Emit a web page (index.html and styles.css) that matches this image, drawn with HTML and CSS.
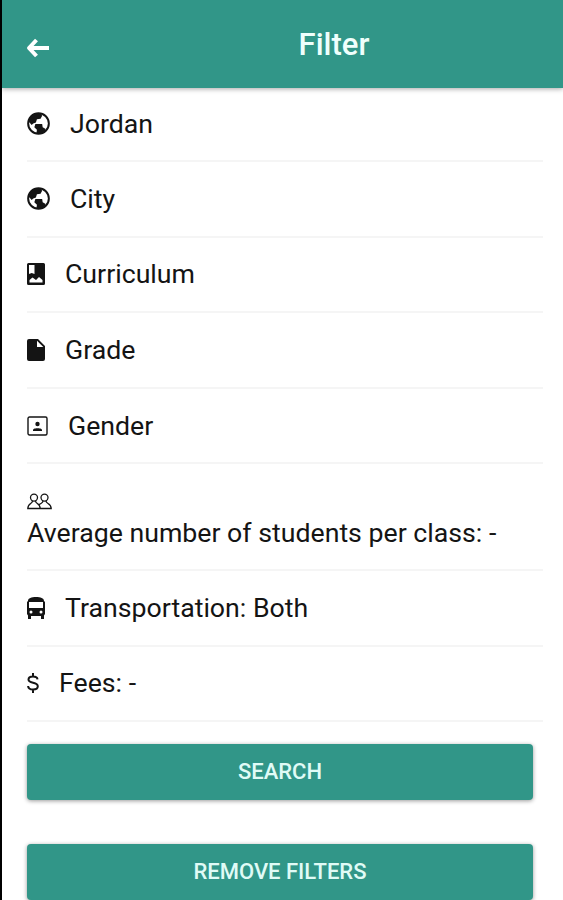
FILE: index.html
```
<!DOCTYPE html>
<html lang="en">
<head>
    <meta charset="UTF-8">
    <meta name="viewport" content="width=device-width, initial-scale=1.0">
    <title>Filter</title>
    <link rel="stylesheet" href="styles.css">
</head>
<body>
    <header class="toolbar">
        <button class="back-button" aria-label="Back">
            <svg width="24" height="20" viewBox="0 0 24 20"><path d="M10.500 2L3 10l7.500 8M3.500 10H23" fill="none" stroke="currentColor" stroke-width="4" stroke-linejoin="round"/></svg>
        </button>
        <h1>Filter</h1>
    </header>
    <main class="content">
        <ul class="filter-list">
            <li class="filter-item">
                <svg class="icon-globe" viewBox="0 0 22 22"><circle cx="11" cy="11" r="9.900" fill="none" stroke="currentColor" stroke-width="1.900"/><path d="M2 7C4 2.500 8 .800 13 1.200l1.500 2.300-1.500 3-3.500.5-1 3-2.500 1-1.500 1.500L1.500 9zM8 11.500h6.500l.5 3 2.500 1.500.5 2.500c-2 1.800-5 2.500-9 2l.5-3.500L7 14.500z"/></svg>
                <span>Jordan</span>
            </li>
            <li class="filter-item">
                <svg class="icon-globe" viewBox="0 0 22 22"><circle cx="11" cy="11" r="9.900" fill="none" stroke="currentColor" stroke-width="1.900"/><path d="M2 7C4 2.500 8 .800 13 1.200l1.500 2.300-1.500 3-3.500.5-1 3-2.500 1-1.500 1.500L1.500 9zM8 11.500h6.500l.5 3 2.500 1.500.5 2.500c-2 1.800-5 2.500-9 2l.5-3.500L7 14.500z"/></svg>
                <span>City</span>
            </li>
            <li class="filter-item">
                <svg class="icon-page" viewBox="0 0 18 22"><path fill-rule="evenodd" d="M1.500 0h15A1.500 1.500 0 0 1 18 1.500v19a1.500 1.500 0 0 1-1.500 1.500h-15A1.500 1.500 0 0 1 0 20.500v-19A1.500 1.500 0 0 1 1.500 0zM2 2v9l2.700-1L7.500 11V2zM2.500 19.500h13V17l-3.500-3-3 3-3.500-2.500-3 2.500z"/></svg>
                <span>Curriculum</span>
            </li>
            <li class="filter-item">
                <svg class="icon-page" viewBox="0 0 18 22"><path fill-rule="evenodd" d="M2 0h9l7 7v13a2 2 0 0 1-2 2H2a2 2 0 0 1-2-2V2a2 2 0 0 1 2-2zM10 1.700V8h6.300z"/></svg>
                <span>Grade</span>
            </li>
            <li class="filter-item">
                <svg class="icon-portrait" viewBox="0 0 21 20"><rect x="1" y="1" width="19" height="18" rx="1.500" fill="none" stroke="currentColor" stroke-width="1.400"/><circle cx="10.500" cy="8" r="2.200"/><path d="M6 15v-1c0-1.400 3-1.800 4.500-1.800S15 12.600 15 14v1z"/></svg>
                <span>Gender</span>
            </li>
            <li class="filter-item filter-item-tall">
                <svg class="icon-people" viewBox="0 0 25 17"><g fill="none" stroke="currentColor" stroke-width="1.300"><circle cx="7" cy="4.600" r="3.500"/><circle cx="17.500" cy="4.600" r="3.500"/><path d="M5.500 8c0 3-4.700 2-4.700 7.500h12.400C13.200 10 8.500 11 8.500 8M16 8c0 2-2.200 2.200-3.600 3.500M19 8c0 3 5.200 2 5.200 7.500h-11"/></g></svg>
                <span>Average number of students per class: -</span>
            </li>
            <li class="filter-item">
                <svg class="icon-page" viewBox="0 0 18 22"><path fill-rule="evenodd" d="M1 4c0-3 3.500-4 8-4s8 1 8 4l1 1v12l-1 1.500V22h-3v-3H4v3H1v-3.500L0 17V5zM2 5v6h14V5zM4 13.500a1.500 1.500 0 1 0 0 3 1.500 1.500 0 1 0 0-3zM14 13.500a1.500 1.500 0 1 0 0 3 1.500 1.500 0 1 0 0-3z"/></svg>
                <span>Transportation: Both</span>
            </li>
            <li class="filter-item">
                <svg class="icon-dollar" viewBox="0 0 12 20"><path d="M10.500 6.300C10.300 4.300 8.600 3.500 6 3.500S1.500 4.600 1.500 6.500C1.500 11 10.800 8.500 10.800 13.300c0 2-1.900 3.200-4.700 3.200S1.200 15.300 1.100 13M6 0v3.500M6 16.500V20" fill="none" stroke="currentColor" stroke-width="2"/></svg>
                <span>Fees: -</span>
            </li>
        </ul>
        <div class="actions">
            <button class="action-button">SEARCH</button>
            <button class="action-button">REMOVE FILTERS</button>
        </div>
    </main>
</body>
</html>
```
FILE: styles.css
```
* {
    box-sizing: border-box;
}
body {
    margin: 0;
    height: 900px;
    overflow: hidden;
    border-left: 2px solid #000;
    background-color: #fff;
    color: #141414;
    font-family: Roboto, sans-serif;
}
button {
    border: none;
    color: #fff;
    font-family: inherit;
    cursor: pointer;
}
.toolbar {
    display: flex;
    align-items: center;
    height: 88px;
    padding-top: 2px;
    background-color: #319688;
    box-shadow: 0 1px 5px rgba(0, 0, 0, 0.35);
}
.back-button {
    display: flex;
    width: 50px;
    padding: 6px 0 0 24px;
    background: none;
}
.toolbar h1 {
    flex: 1;
    margin: 0;
    padding-left: 53px;
    color: #effffc;
    font-size: 31px;
    font-weight: 500;
    line-height: 36px;
    text-align: center;
}
.content {
    padding: 0 20px 0 25px;
}
.filter-list {
    margin: 0;
    padding: 0;
    list-style: none;
}
.filter-item {
    display: flex;
    align-items: center;
    gap: 20px;
    height: 75.6px;
    border-bottom: 2px solid #f5f5f5;
    font-size: 26.7px;
    line-height: 32px;
    white-space: nowrap;
}
.filter-item:first-child {
    height: 74px;
    padding-bottom: 1px;
}
.filter-item svg {
    flex: none;
    fill: currentColor;
}
.filter-item-tall {
    flex-direction: column;
    align-items: flex-start;
    justify-content: center;
    gap: 7px;
    height: 106.6px;
    padding-top: 8px;
}
.icon-globe {
    width: 23px;
    height: 23px;
}
.icon-page {
    width: 18px;
    height: 22px;
}
.icon-portrait {
    width: 21px;
    height: 20px;
}
.icon-people {
    width: 25px;
    height: 17px;
}
.icon-dollar {
    width: 12px;
    height: 20px;
}
.actions {
    display: flex;
    flex-direction: column;
    gap: 44px;
    padding: 22px 10px 0 0;
}
.action-button {
    height: 56px;
    padding-bottom: 3px;
    border-radius: 4px;
    background-color: #319688;
    box-shadow: 0 1px 4px rgba(0, 0, 0, 0.4);
    color: #e0fbf6;
    font-size: 22px;
    font-weight: 500;
}
```
